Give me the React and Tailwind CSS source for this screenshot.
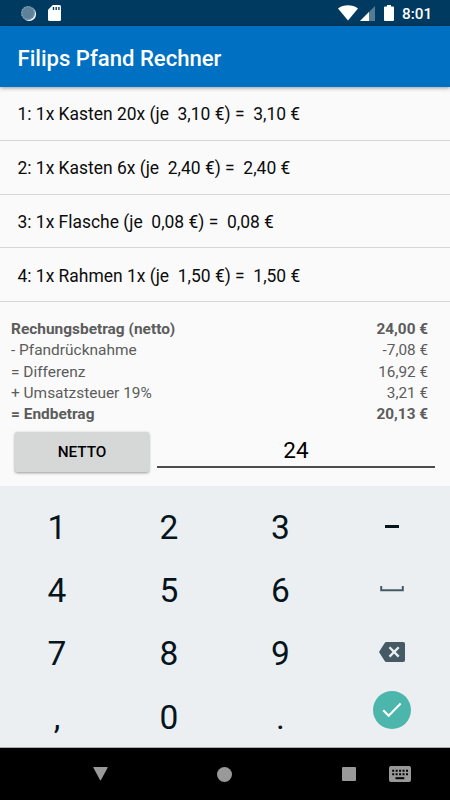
import React from "react";

const deposits = [
  "1: 1x Kasten 20x (je  3,10 €) =  3,10 €",
  "2: 1x Kasten 6x (je  2,40 €) =  2,40 €",
  "3: 1x Flasche (je  0,08 €) =  0,08 €",
  "4: 1x Rahmen 1x (je  1,50 €) =  1,50 €",
];

const totals = [
  { label: "Rechungsbetrag (netto)", value: "24,00 €", strong: true },
  { label: "- Pfandrücknahme", value: "-7,08 €" },
  { label: "= Differenz", value: "16,92 €" },
  { label: "+ Umsatzsteuer 19%", value: "3,21 €" },
  { label: "= Endbetrag", value: "20,13 €", strong: true },
];

function StatusBar() {
  return (
    <div className="flex h-[26px] shrink-0 items-center bg-[#003a60] pl-5 pr-[18px]">
      <svg width="17" height="17" viewBox="0 0 17 17">
        <circle cx="9.2" cy="9" r="6.9" fill="#fff" />
        <circle cx="8" cy="8" r="7" fill="#5c8199" />
        <circle cx="8" cy="8" r="6.2" fill="none" stroke="#8ba6b7" strokeWidth="1.2" strokeDasharray="1.2 1.5" />
      </svg>
      <svg className="ml-[11px]" width="13" height="16" viewBox="0 0 13 16">
        <path d="M4.8 0H11.5Q13 0 13 1.5V14.500Q13 16 11.500 16H1.500Q0 16 0 14.500V4.800Z" fill="#fff" />
        <path d="M5.500 2v3M8.200 2v3M10.900 2v3" stroke="#003a60" strokeWidth="1.400" />
      </svg>
      <div className="flex-1" />
      <svg width="20" height="16" viewBox="0 0 20 16">
        <path d="M0 3.500C5.500-.7 14.500-.7 20 3.500L10 15.600Z" fill="#fff" />
      </svg>
      <svg className="ml-[2px]" width="15" height="15" viewBox="0 0 15 15">
        <path d="M15 0V15H0Z" fill="#547c95" />
        <path d="M9 6V15H0Z" fill="#fff" />
      </svg>
      <svg className="ml-[9px]" width="10" height="16" viewBox="0 0 10 16">
        <path d="M3 0h4v1.600h2q1 0 1 1V15q0 1-1 1H1q-1 0-1-1V2.600q0-1 1-1h2Z" fill="#fff" />
      </svg>
      <span className="ml-2 w-[30px] whitespace-nowrap pt-[2px] text-[15.3px] leading-5 font-medium text-white">8:01</span>
    </div>
  );
}

function Key({ children }) {
  return <div className="flex items-center justify-center text-[33.5px] leading-none text-[#06141c]">{children}</div>;
}

function Keypad() {
  return (
    <div className="grid h-[262px] shrink-0 grid-cols-[112px_112px_111px_111px] grid-rows-[63.300px_63.300px_63.300px_63.300px] border-b border-[#a9adaf] bg-[#ebeff2] pl-[1px] pt-[10px]">
      <Key>1</Key>
      <Key>2</Key>
      <Key>3</Key>
      <Key>
        <div className="mb-[2px] h-[2.500px] w-[14px] bg-[#06141c]" />
      </Key>
      <Key>4</Key>
      <Key>5</Key>
      <Key>6</Key>
      <Key>
        <svg className="mb-1" width="24" height="6" viewBox="0 0 24 6">
          <path d="M1.200 0V4.200H22.800V0" fill="none" stroke="#455a64" strokeWidth="2" />
        </svg>
      </Key>
      <Key>7</Key>
      <Key>8</Key>
      <Key>9</Key>
      <Key>
        <svg className="mb-1" width="26" height="20" viewBox="0 0 26 20">
          <path d="M7.500 0H24.200Q26 0 26 1.800V18.200Q26 20 24.200 20H7.500Q6.300 20 5.700 19L0 10L5.700 1Q6.300 0 7.500 0Z" fill="#455a64" />
          <path d="M10.500 5.200L19.700 14.600M19.700 5.200L10.500 14.600" stroke="#ebeff2" strokeWidth="2.300" />
        </svg>
      </Key>
      <Key>,</Key>
      <Key>0</Key>
      <Key>.</Key>
      <Key>
        <div className="mb-4 flex size-[38px] items-center justify-center rounded-full bg-[#4db6ac]">
          <svg width="20" height="16" viewBox="0 0 20 16">
            <path d="M1.200 8.200L6.700 13.700L18.700 1.500" fill="none" stroke="#fff" strokeWidth="2.100" />
          </svg>
        </div>
      </Key>
    </div>
  );
}

function NavigationBar() {
  return (
    <div className="flex h-[52px] shrink-0 items-center bg-black pl-[93px] text-[#999]">
      <svg width="15" height="14" viewBox="0 0 15 14" fill="currentColor">
        <path d="M.8 0H14.200Q15 0 14.600 .8L8 13Q7.500 13.800 7 13L.4 .8Q0 0 .8 0Z" />
      </svg>
      <div className="ml-[109px] size-[15px] rounded-full bg-[#999]" />
      <div className="ml-[110px] size-[14px] rounded-[1px] bg-[#999]" />
      <svg className="ml-[33px]" width="22" height="16" viewBox="0 0 22 16">
        <rect width="22" height="16" rx="2" fill="currentColor" />
        <path d="M3.200 4.800H19M3.200 8.200H19" stroke="#000" strokeWidth="2" strokeDasharray="2 1.450" />
        <path d="M6.500 12.200H15.300" stroke="#000" strokeWidth="2" />
      </svg>
    </div>
  );
}

export default function App() {
  return (
    <div className="flex h-[800px] w-[450px] flex-col overflow-hidden bg-[#fafafa] font-[Roboto,sans-serif]">
      <StatusBar />
      <header className="z-10 flex h-[61px] shrink-0 items-center bg-[#0071c2] pl-[17.500px] pt-[3px] shadow-[0_1px_4px_rgba(0,0,0,0.4)]">
        <h1 className="text-[22.100px] leading-7 font-medium text-white">Filips Pfand Rechner</h1>
      </header>
      <ul className="h-[216px] shrink-0">
        {deposits.map((line) => (
          <li key={line} className="flex h-[53.800px] items-center whitespace-pre border-b border-[#d6d6d6] pl-[17.500px] pt-[2px] text-[17.440px] text-[#0c0c0c]">
            {line}
          </li>
        ))}
      </ul>
      <section className="flex h-[122px] shrink-0 flex-col pl-[11px] pr-[22px] pt-[16px] text-[15.300px] text-[#5c5c5c]">
        {totals.map(({ label, value, strong }) => (
          <div key={label} className={strong ? "flex h-[21.300px] items-center justify-between font-bold" : "flex h-[21.300px] items-center justify-between"}>
            <span className="text-[15.450px]">{label}</span>
            <span>{value}</span>
          </div>
        ))}
      </section>
      <div className="flex h-[61px] shrink-0 items-start pl-[15px] pr-[15px] pt-[7px]">
        <button className="h-[40px] w-[134px] rounded-[2px] bg-[#d6d8d7] pt-px text-[15.300px] font-medium text-black shadow-[0_1px_3px_rgba(0,0,0,0.4)]">NETTO</button>
        <div className="ml-2 flex h-[36px] flex-1 items-center justify-center border-b-2 border-[#4c4c4c] pt-[2px] text-[22.500px] leading-none text-black">24</div>
      </div>
      <Keypad />
      <NavigationBar />
    </div>
  );
}
